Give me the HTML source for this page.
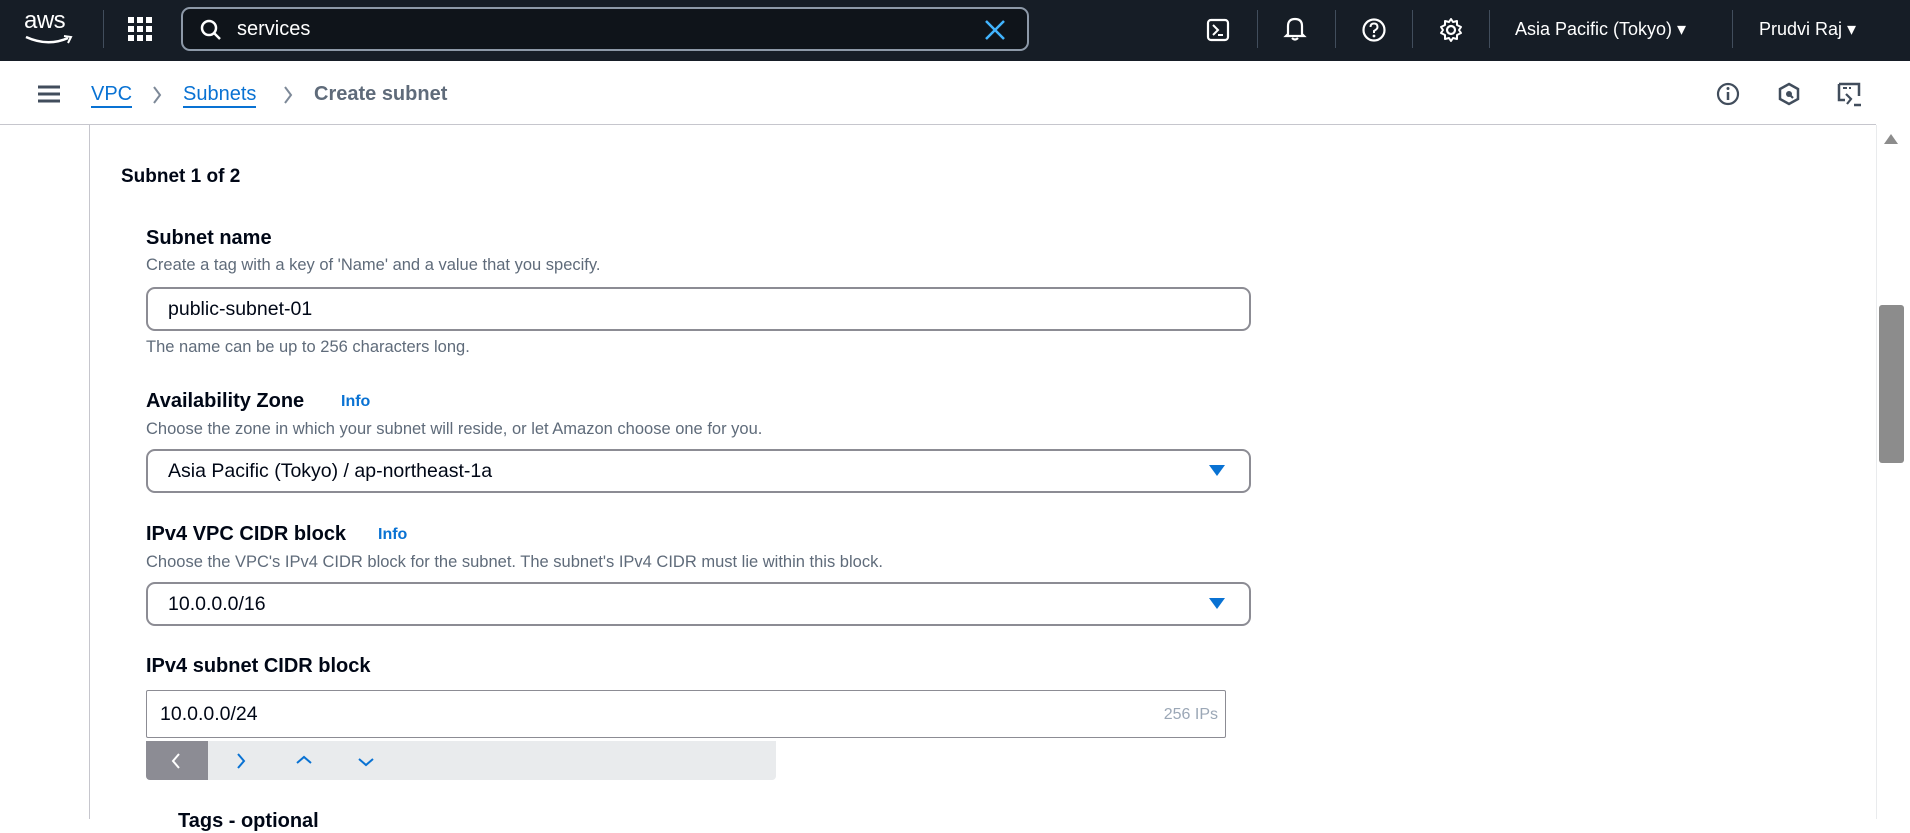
<!DOCTYPE html>
<html><head><meta charset="utf-8"><style>
*{margin:0;padding:0;box-sizing:border-box}
body{width:1910px;height:819px;overflow:hidden;background:#fff;font-family:"Liberation Sans",Arial,sans-serif;position:relative;color:#000716}
.a{position:absolute;white-space:nowrap}
.top{left:0;top:0;width:1910px;height:61px;background:#161d26}
.sep{position:absolute;top:10px;width:1px;height:38px;background:#414d5c}
.lbl{font-weight:bold;font-size:20px;color:#000716}
.desc{font-size:16.5px;color:#5f6b7a}
.inp{position:absolute;left:146px;width:1105px;height:44px;border:2px solid #8c8c94;border-radius:9px;font-size:19.5px;padding:9px 0 0 20px;color:#000716}
.info{color:#0972d3;font-size:16px;font-weight:bold}
.tri{position:absolute;right:24px;top:14px;width:0;height:0;border-left:8px solid transparent;border-right:8px solid transparent;border-top:11px solid #0972d3}
</style></head><body>
<div class="a top"></div>
<div class="a" style="left:24px;top:7px;color:#fff;font-size:24px;letter-spacing:-0.5px">aws</div>
<svg class="a" style="left:24px;top:35px" width="52" height="12"><path d="M2 2 Q24 12 44 3" stroke="#fff" stroke-width="2.5" fill="none"/><path d="M40 1 L47 2 L44 8" stroke="#fff" stroke-width="2" fill="none"/></svg>
<div class="sep" style="left:103px"></div>
<svg class="a" style="left:128px;top:17px" width="26" height="26" fill="#fff"><rect x="0" y="0" width="6" height="6"/><rect x="9" y="0" width="6" height="6"/><rect x="18" y="0" width="6" height="6"/><rect x="0" y="9" width="6" height="6"/><rect x="9" y="9" width="6" height="6"/><rect x="18" y="9" width="6" height="6"/><rect x="0" y="18" width="6" height="6"/><rect x="9" y="18" width="6" height="6"/><rect x="18" y="18" width="6" height="6"/></svg>
<div class="a" style="left:181px;top:7px;width:848px;height:44px;border:2px solid #8d99a8;border-radius:9px;background:#0f141a"></div>
<svg class="a" style="left:199px;top:18px" width="24" height="24"><circle cx="10" cy="10" r="7" stroke="#fff" stroke-width="2.5" fill="none"/><path d="M15 15 L21 21" stroke="#fff" stroke-width="2.5"/></svg>
<div class="a" style="left:237px;top:18px;color:#fff;font-size:20px">services</div>
<svg class="a" style="left:984px;top:19px" width="22" height="22"><path d="M2 2 L20 20 M20 2 L2 20" stroke="#42b4ff" stroke-width="2.5"/></svg>
<svg class="a" style="left:1206px;top:18px" width="24" height="24"><rect x="2" y="2" width="20" height="20" rx="3" stroke="#fff" stroke-width="2.2" fill="none"/><path d="M7 7 L12 12 L7 17 M12 17 L17 17" stroke="#fff" stroke-width="2" fill="none"/></svg>
<div class="sep" style="left:1257px"></div>
<svg class="a" style="left:1283px;top:16px" width="24" height="26"><path d="M5 18 L5 10 Q5 3 12 3 Q19 3 19 10 L19 18 L21 20 L3 20 Z M9 22 Q12 25 15 22" stroke="#fff" stroke-width="2.2" fill="none"/></svg>
<div class="sep" style="left:1335px"></div>
<svg class="a" style="left:1361px;top:17px" width="26" height="26"><circle cx="13" cy="13" r="10.5" stroke="#fff" stroke-width="2.2" fill="none"/><path d="M9.5 10 Q9.5 6.5 13 6.5 Q16.5 6.5 16.5 10 Q16.5 12 13 14 L13 16" stroke="#fff" stroke-width="2" fill="none"/><circle cx="13" cy="19" r="1.4" fill="#fff"/></svg>
<div class="sep" style="left:1412px"></div>
<svg class="a" style="left:1438px;top:17px" width="26" height="26"><circle cx="13" cy="13" r="4" stroke="#fff" stroke-width="2.2" fill="none"/><path d="M13 2 L15 5 L19 4 L19 8 L23 10 L21 13 L23 16 L19 18 L19 22 L15 21 L13 24 L11 21 L7 22 L7 18 L3 16 L5 13 L3 10 L7 8 L7 4 L11 5 Z" stroke="#fff" stroke-width="2" fill="none" stroke-linejoin="round"/></svg>
<div class="sep" style="left:1489px"></div>
<div class="a" style="left:1515px;top:19px;color:#fff;font-size:18px">Asia Pacific (Tokyo) ▾</div>
<div class="sep" style="left:1732px"></div>
<div class="a" style="left:1759px;top:19px;color:#fff;font-size:18px">Prudvi Raj ▾</div>
<div class="a" style="left:0;top:124px;width:1876px;height:1px;background:#c6c6cd"></div>
<svg class="a" style="left:38px;top:85px" width="22" height="18"><path d="M0 2 H22 M0 9 H22 M0 16 H22" stroke="#414d5c" stroke-width="3"/></svg>
<div class="a" style="left:91px;top:82px;font-size:20px;color:#0972d3;border-bottom:2px solid #0972d3;line-height:24px">VPC</div>
<svg class="a" style="left:151px;top:85px" width="12" height="20"><path d="M3 2 L9 10 L3 18" stroke="#7d8998" stroke-width="2" fill="none"/></svg>
<div class="a" style="left:183px;top:82px;font-size:20px;color:#0972d3;border-bottom:2px solid #0972d3;line-height:24px">Subnets</div>
<svg class="a" style="left:282px;top:85px" width="12" height="20"><path d="M3 2 L9 10 L3 18" stroke="#7d8998" stroke-width="2" fill="none"/></svg>
<div class="a" style="left:314px;top:82px;font-size:20px;font-weight:bold;color:#5f6b7a;line-height:24px">Create subnet</div>
<svg class="a" style="left:1716px;top:82px" width="24" height="24"><circle cx="12" cy="12" r="10" stroke="#414d5c" stroke-width="2.2" fill="none"/><path d="M12 10 V18" stroke="#414d5c" stroke-width="2.5"/><circle cx="12" cy="6.5" r="1.5" fill="#414d5c"/></svg>
<svg class="a" style="left:1777px;top:82px" width="24" height="24"><path d="M12 2 L21 7 L21 17 L12 22 L3 17 L3 7 Z" stroke="#414d5c" stroke-width="2.5" fill="none"/><circle cx="12" cy="12" r="3" fill="#414d5c"/><path d="M12 12 L16 16" stroke="#414d5c" stroke-width="2.2"/></svg>
<svg class="a" style="left:1837px;top:82px" width="26" height="26"><path d="M2 2 H22 V14 M2 2 V18 H8" stroke="#414d5c" stroke-width="2.5" fill="none"/><path d="M6 6 H10 M12 6 H14" stroke="#414d5c" stroke-width="2"/><path d="M9 12 L14 17 L10 22" stroke="#414d5c" stroke-width="2.2" fill="none"/><path d="M17 23 H24" stroke="#414d5c" stroke-width="2.5"/></svg>
<div class="a" style="left:1876px;top:125px;width:34px;height:694px;background:#fff;border-left:1px solid #e9ebed"></div>
<div class="a" style="left:1880px;top:0;width:30px;height:61px;background:#161d26"></div>
<div class="a" style="left:1879px;top:305px;width:25px;height:158px;background:#8c8c8c;border-radius:3px"></div>
<div class="a" style="left:1884px;top:134px;width:0;height:0;border-left:7px solid transparent;border-right:7px solid transparent;border-bottom:10px solid #8c8c8c"></div>
<div class="a" style="left:89px;top:125px;width:1px;height:694px;background:#c6c6cd"></div>
<div class="a lbl" style="left:121px;top:166px;font-size:19px">Subnet 1 of 2</div>
<div class="a lbl" style="left:146px;top:227px">Subnet name</div>
<div class="a desc" style="left:146px;top:256px">Create a tag with a key of 'Name' and a value that you specify.</div>
<div class="inp" style="top:287px">public-subnet-01</div>
<div class="a desc" style="left:146px;top:338px">The name can be up to 256 characters long.</div>
<div class="a lbl" style="left:146px;top:390px">Availability Zone</div>
<div class="a info" style="left:341px;top:393px">Info</div>
<div class="a desc" style="left:146px;top:420px">Choose the zone in which your subnet will reside, or let Amazon choose one for you.</div>
<div class="inp" style="top:449px">Asia Pacific (Tokyo) / ap-northeast-1a<div class="tri"></div></div>
<div class="a lbl" style="left:146px;top:523px">IPv4 VPC CIDR block</div>
<div class="a info" style="left:378px;top:526px">Info</div>
<div class="a desc" style="left:146px;top:553px">Choose the VPC's IPv4 CIDR block for the subnet. The subnet's IPv4 CIDR must lie within this block.</div>
<div class="inp" style="top:582px">10.0.0.0/16<div class="tri"></div></div>
<div class="a lbl" style="left:146px;top:655px">IPv4 subnet CIDR block</div>
<div class="a" style="left:146px;top:690px;width:1080px;height:48px;border:1px solid #8c8c94;border-radius:2px;font-size:19.5px;padding:12px 0 0 13px">10.0.0.0/24<span style="position:absolute;right:7px;top:15px;font-size:16px;color:#9ba7b6">256 IPs</span></div>
<div class="a" style="left:146px;top:741px;width:630px;height:39px;background:#e9ebed;border-radius:0 0 4px 4px"></div>
<div class="a" style="left:146px;top:741px;width:62px;height:39px;background:#8c8c94;border-radius:0 0 0 4px"></div>
<svg class="a" style="left:170px;top:752px" width="12" height="18"><path d="M9 2 L3 9 L9 16" stroke="#fff" stroke-width="2" fill="none"/></svg>
<svg class="a" style="left:235px;top:752px" width="12" height="18"><path d="M3 2 L9 9 L3 16" stroke="#0972d3" stroke-width="2" fill="none"/></svg>
<svg class="a" style="left:295px;top:754px" width="18" height="12"><path d="M2 9 L9 3 L16 9" stroke="#0972d3" stroke-width="2" fill="none"/></svg>
<svg class="a" style="left:357px;top:756px" width="18" height="12"><path d="M2 3 L9 9 L16 3" stroke="#0972d3" stroke-width="2" fill="none"/></svg>
<div class="a lbl" style="left:178px;top:810px">Tags - optional</div>
</body></html>
